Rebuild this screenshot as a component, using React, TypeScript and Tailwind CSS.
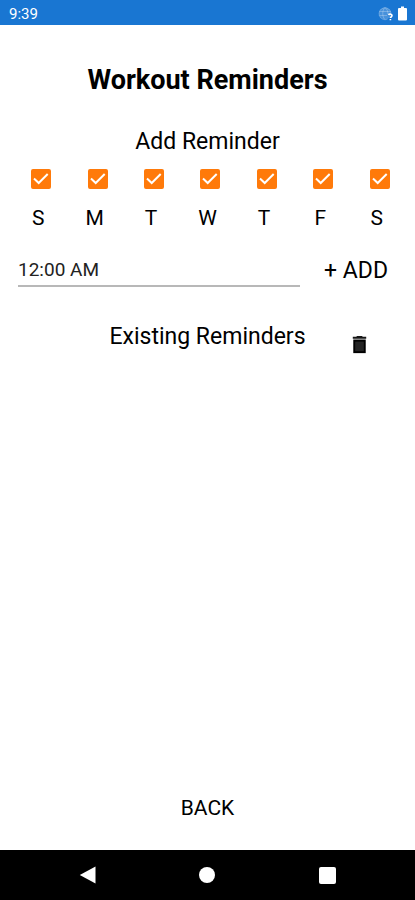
import { useState } from "react";

const DAYS = [
  { name: "Sunday", letter: "S" },
  { name: "Monday", letter: "M" },
  { name: "Tuesday", letter: "T" },
  { name: "Wednesday", letter: "W" },
  { name: "Thursday", letter: "T" },
  { name: "Friday", letter: "F" },
  { name: "Saturday", letter: "S" },
];

function StatusBar() {
  return (
    <header className="flex h-[25px] items-center justify-between bg-[#1976d2] pr-2 pl-[9px] pt-0.5 text-white">
      <span className="text-[15px] leading-5">9:39</span>
      <div className="flex items-center gap-1">
        <svg className="h-4 w-4" viewBox="0 0 16 16" fill="none" aria-hidden="true">
          <circle cx="7" cy="7.500" r="6" fill="#fff" fillOpacity="0.2" />
          <g stroke="#fff" strokeOpacity="0.25" strokeWidth="1">
            <path d="M9.5 13.2A6 6 0 1 1 13 7" />
            <path d="M7 1.500C4 4 4 11 7 13.500M7 1.500C9.500 3.500 10 6 9.800 8M1.500 5.500H12.500M1.500 9.500H9" />
          </g>
          <path d="M10.500 8.800C11 7.800 14 7.700 14 9.500C14 10.700 12.500 10.800 12.400 12M12.400 13V14.200" stroke="#fff" strokeWidth="1.600" />
        </svg>
        <svg className="h-[15px] w-[9px]" viewBox="0 0 9 15" fill="#fff" aria-hidden="true">
          <path d="M3 0.500h3V2h2a1 1 0 0 1 1 1v10.500a1 1 0 0 1-1 1H1a1 1 0 0 1-1-1V3a1 1 0 0 1 1-1h2z" />
        </svg>
      </div>
    </header>
  );
}

function DayToggle({ name, letter }: { name: string; letter: string }) {
  const [checked, setChecked] = useState(true);
  return (
    <label className="flex flex-col items-center gap-4">
      <span className="ml-1.5 grid h-5 w-5 place-items-center">
        <input
          type="checkbox"
          aria-label={name}
          checked={checked}
          onChange={() => setChecked(!checked)}
          className="col-start-1 row-start-1 h-5 w-5 appearance-none rounded-[2px] border-2 border-[#ff7a0a] checked:bg-[#ff7a0a]"
        />
        {checked && (
          <svg className="pointer-events-none col-start-1 row-start-1 h-5 w-5" viewBox="0 0 20 20" fill="none" aria-hidden="true">
            <path d="M3 9.500L7.700 14L16.700 5" stroke="#fff" strokeWidth="2" />
          </svg>
        )}
      </span>
      <span className="text-[21px] leading-[26px]">{letter}</span>
    </label>
  );
}

export default function App() {
  const [time, setTime] = useState("12:00 AM");
  return (
    <div className="flex min-h-screen flex-col bg-white font-[Roboto,sans-serif] text-black">
      <StatusBar />
      <main className="flex flex-1 flex-col">
        <h1 className="mt-[37px] text-center text-[27px] leading-9 font-bold">Workout Reminders</h1>
        <h2 className="mt-7 text-center text-[23px] leading-8">Add Reminder</h2>
        <div className="mt-[11px] grid grid-cols-7 px-2.5">
          {DAYS.map((day) => (
            <DayToggle key={day.name} name={day.name} letter={day.letter} />
          ))}
        </div>
        <div className="mt-6 flex items-start pr-[27px] pl-[18px]">
          <input
            type="text"
            aria-label="Reminder time"
            value={time}
            onChange={(e) => setTime(e.target.value)}
            className="h-8 min-w-0 flex-1 border-b-2 border-[#b8b8b8] pb-0.5 text-[19px] leading-6 text-[#222] outline-none"
          />
          <button type="button" className="ml-6 text-[23px] leading-8">+ ADD</button>
        </div>
        <div className="mt-[34px] grid grid-cols-[1fr_auto_1fr]">
          <h2 className="col-start-2 text-[23px] leading-8">Existing Reminders</h2>
          <button type="button" aria-label="Delete reminders" className="mt-3 ml-[42px] h-[23px] w-[23px]">
            <svg className="h-[23px] w-[23px]" viewBox="0 0 24 24" aria-hidden="true">
              <path d="M5.500 6.800h13V21H5.500z" fill="#000" />
              <path d="M7.500 9h9v10h-9z" fill="#242424" />
              <path d="M19 4h-3.500l-1-1h-5l-1 1H5v2h14V4z" fill="#161616" />
            </svg>
          </button>
        </div>
        <button type="button" className="mt-auto mb-6 self-center text-[21px] leading-9">BACK</button>
      </main>
      <nav className="grid h-[50px] grid-cols-3 place-items-center bg-black px-7">
        <button type="button" aria-label="Back">
          <svg className="h-[18px] w-[18px]" viewBox="0 0 18 18" fill="#fff" aria-hidden="true">
            <path d="M0.800 9L16.500 0.500V17.500z" />
          </svg>
        </button>
        <button type="button" aria-label="Home" className="h-4 w-4 rounded-full bg-white" />
        <button type="button" aria-label="Recent apps" className="h-[17px] w-[17px] rounded-[2px] bg-white" />
      </nav>
    </div>
  );
}
